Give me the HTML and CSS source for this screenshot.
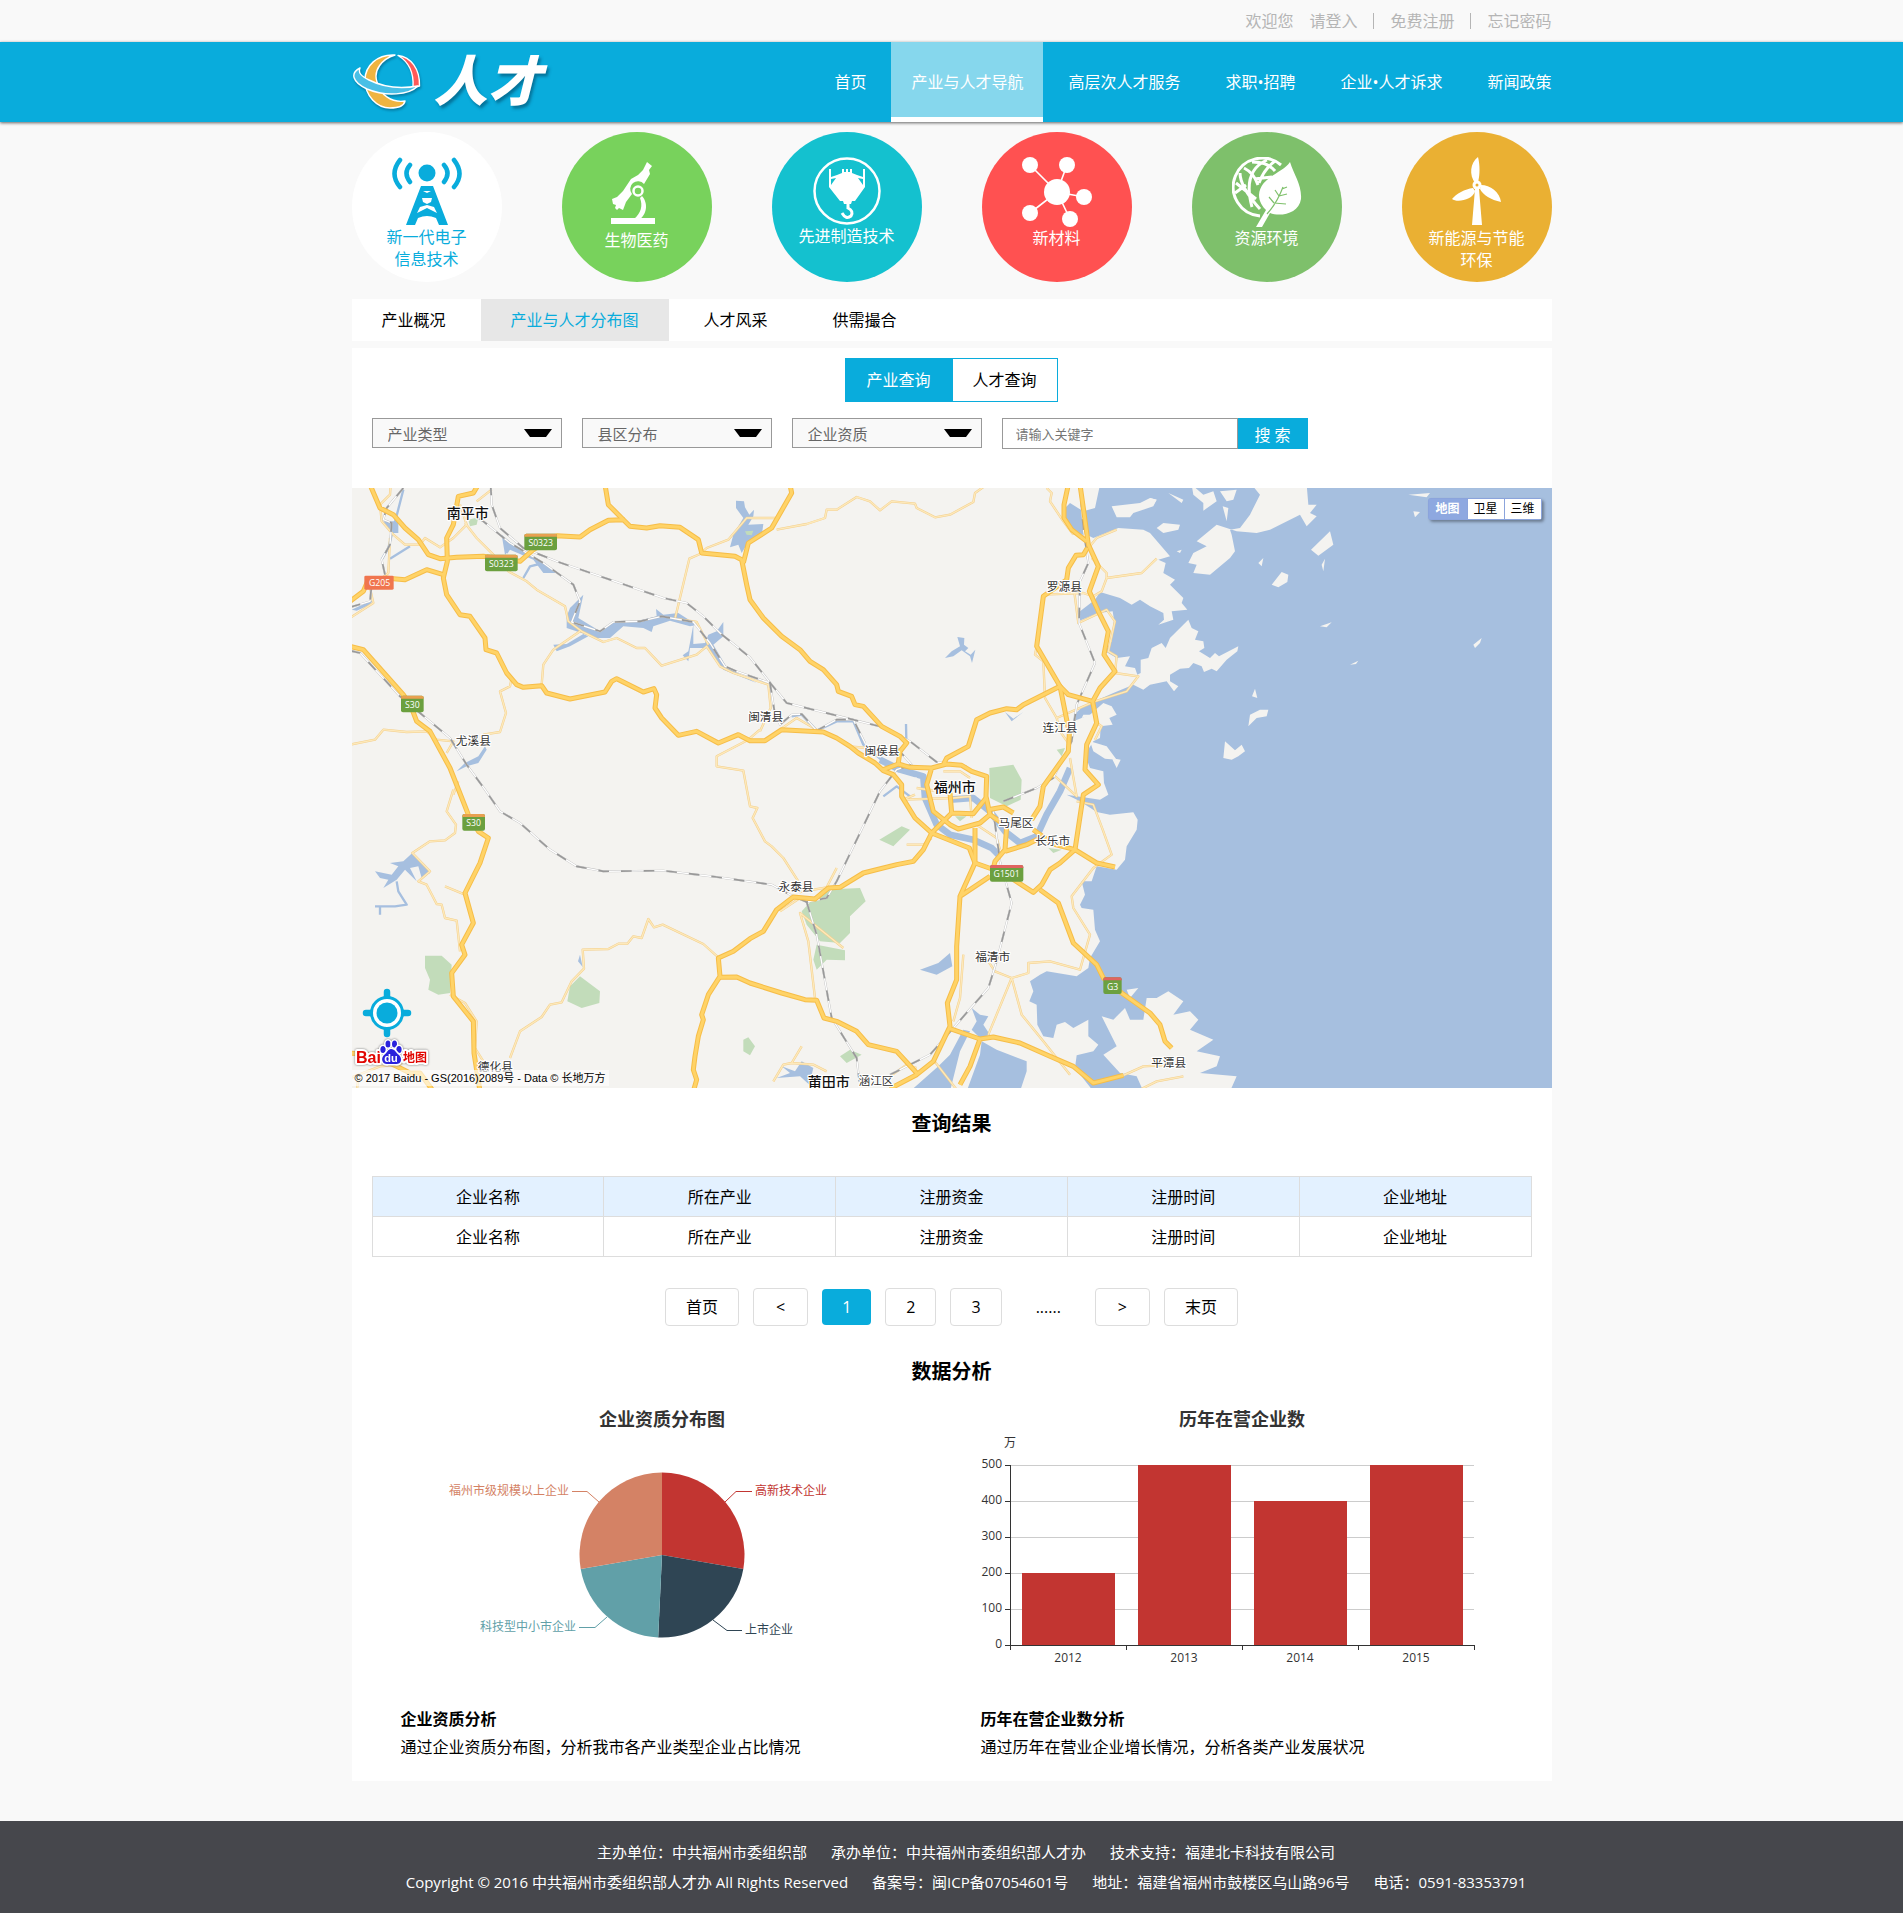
FILE: index.html
```html
<!DOCTYPE html>
<html lang="zh-CN">
<head>
<meta charset="utf-8">
<meta name="viewport" content="width=device-width, initial-scale=1">
<title>产业与人才分布图</title>
<link rel="stylesheet" href="styles.css">
</head>
<body>
<div class="topbar">
  <div class="container topbar-inner">
    <span>欢迎您</span><a href="#">请登入</a><i class="bar"></i><a href="#">免费注册</a><i class="bar"></i><a href="#">忘记密码</a>
  </div>
</div>

<header class="header">
  <div class="container header-inner">
    <a class="logo" href="#">
      <svg width="70" height="80" viewBox="0 0 70 80" aria-hidden="true">
        <g stroke="#fff" stroke-width="1.4" stroke-linejoin="round">
          <path fill="#efb440" d="M43 13C25 12 13 24 13 38C13 54 25 66 38 66C46 66 52 64 53 59C40 61 28 53 25 40C21 28 30 17 43 13Z"/>
          <path fill="#ff5a58" d="M46 13.500C59 15 68 27 67.500 44L61 45.500C62 31 57 20 46 13.500Z"/>
          <path fill="#49bfe6" d="M8 26C-2 31 0 40 15 47C34 55 57 53 66 44C49 47 31 45 17 38C9 34 6 31 8 26Z"/>
        </g>
      </svg>
      <span class="logo-text">人才</span>
    </a>
    <nav class="nav">
      <a href="#">首页</a>
      <a href="#" class="active">产业与人才导航</a>
      <a href="#">高层次人才服务</a>
      <a href="#">求职•招聘</a>
      <a href="#">企业•人才诉求</a>
      <a href="#">新闻政策</a>
    </nav>
  </div>
</header>

<main class="container">
  <div class="industries">
    <a href="#" class="industry electronic">
      <svg width="70" height="69" viewBox="0 0 70 69" fill="none" stroke="#09acdc" aria-hidden="true">
        <circle cx="35" cy="16" r="8.500" fill="#09acdc" stroke="none"/>
        <g stroke-width="4.500" stroke-linecap="round"><path d="M18 8Q11 16 18 25M8 3Q-3 17 8 30M52 8Q59 16 52 25M62 3Q73 17 62 30"/></g>
        <path fill="#09acdc" fill-rule="evenodd" stroke="none" d="M29 29H41L56 68H47L44 61Q35 57 26 61L23 68H14ZM31 34L35 36L39 34ZM30 41L31 45L35 47L39 45L40 41ZM28 50L25 56L35 51L45 56L42 50L35 48Z"/>
      </svg>
      <span>新一代电子<br>信息技术</span>
    </a>
    <a href="#" class="industry medicine">
      <svg width="54" height="72" viewBox="0 0 54 72" fill="#fff" aria-hidden="true">
        <path d="M37 5L42 9L39 13L40 17L34 27A7 7 0 0 0 22 37L16 45L13 53L9 51L7 53L5 51L6 48L3 47L2 42L7 40L13 34L21 22L28 18L33 13ZM1 61H45V67H1Z"/>
        <circle cx="28" cy="34" r="4.500" fill="none" stroke="#fff" stroke-width="2.500"/>
        <path d="M32 39C39 47 36 58 30 62H24C31 56 33 49 30 41Z"/>
      </svg>
      <span>生物医药</span>
    </a>
    <a href="#" class="industry manufacture">
      <svg width="68" height="68" viewBox="0 0 68 68" fill="#fff" aria-hidden="true">
        <circle cx="34" cy="34" r="32.500" fill="none" stroke="#fff" stroke-width="2.500"/>
        <path fill-rule="evenodd" d="M16 12H18V20L24 18L29 16V12H31V15H33V12H35V15H37V12H39V16L44 18L50 20V12H52V30L42 44H39L38 47H31L30 44H27L16 30ZM18 22V28L23 21ZM50 22V28L45 21Z"/>
        <path d="M35 46V51Q41 54 38 59Q33 63 29 56" fill="none" stroke="#fff" stroke-width="3"/>
      </svg>
      <span>先进制造技术</span>
    </a>
    <a href="#" class="industry material">
      <svg width="70" height="70" viewBox="0 0 70 70" fill="#fff" aria-hidden="true">
        <path d="M8 8L35 35L45 8M35 35L62 40M8 56L35 35L48 62" fill="none" stroke="#fff" stroke-width="1.600"/>
        <circle cx="35" cy="35" r="13"/><circle cx="8" cy="8" r="8"/><circle cx="45" cy="8" r="8"/><circle cx="62" cy="40" r="8"/><circle cx="8" cy="56" r="8"/><circle cx="48" cy="62" r="8"/>
      </svg>
      <span>新材料</span>
    </a>
    <a href="#" class="industry environment">
      <svg width="70" height="70" viewBox="0 0 70 70" fill="none" stroke="#fff" aria-hidden="true">
        <g stroke-width="3"><path d="M49 8A29 29 0 1 0 28 59"/><path d="M20 5Q36 5 43 14M35 3Q10 14 20 50M8 16Q8 30 28 52M4 26L24 42M12 11Q22 16 26 28M43 4Q32 12 27 26M22 22L40 20M3 36L14 28"/></g>
        <path fill="#fff" stroke="none" d="M58 5C51 16 28 20 27 38C27 45 31 50 34 53L24 70H30L38 56C48 60 67 57 69 42C70 28 62 18 58 5Z"/>
        <path stroke="#7ec06b" stroke-width="1.200" d="M35 57Q45 46 51 30M42 46L37 40M42 46L54 47M47 39L43 33M47 39L55 37M50 32L55 30"/>
      </svg>
      <span>资源环境</span>
    </a>
    <a href="#" class="industry energy">
      <svg width="52" height="70" viewBox="0 0 52 70" fill="#fff" aria-hidden="true">
        <path d="M27 0C29 8 29 18 27 25L24 26C18 18 19 6 27 0ZM30 28C39 28 49 35 50 45C40 43 32 38 29 32ZM22 31C14 32 5 37 1 42C6 46 22 43 24 34ZM24 32H28L31 68H21Z"/>
        <circle cx="26" cy="28" r="4.500"/><circle cx="26" cy="28" r="1.500" fill="#eab033"/>
      </svg>
      <span>新能源与节能<br>环保</span>
    </a>
  </div>

  <nav class="tabs">
    <a href="#">产业概况</a>
    <a href="#" class="active">产业与人才分布图</a>
    <a href="#">人才风采</a>
    <a href="#">供需撮合</a>
  </nav>

  <section class="panel">
    <div class="toggle">
      <button type="button" class="active">产业查询</button><button type="button">人才查询</button>
    </div>
    <form class="filters" onsubmit="return false">
      <div class="select"><select aria-label="产业类型"><option>产业类型</option></select></div>
      <div class="select"><select aria-label="县区分布"><option>县区分布</option></select></div>
      <div class="select"><select aria-label="企业资质"><option>企业资质</option></select></div>
      <div class="search">
        <input type="text" placeholder="请输入关键字" aria-label="关键字"><button type="submit">搜 索</button>
      </div>
    </form>

    <div class="map">
      <svg class="map-canvas" viewBox="6 10 3600 1800" preserveAspectRatio="xMidYMid slice" role="img" aria-label="福州市地图">
        <defs>
          <g id="highways">
            <path d="M60 0L90 70L130 90L165 130L205 165L235 210L270 222L320 218L400 215L510 230L550 195L590 170L620 153L690 157L720 135L775 107L820 105L840 125L890 130L930 123L990 128L1045 165L1055 205L1155 215L1175 225L1190 300L1200 345L1240 400L1295 455L1350 495L1380 530L1420 555L1460 600L1465 620L1505 635L1515 660L1540 665L1595 725L1650 755L1670 775L1650 800L1645 835"/>
            <path d="M1180 235L1195 175L1265 130L1325 25L1320 0M765 0L775 60L820 105"/>
            <path d="M385 0L370 25L325 35L310 120L290 160L292 230L280 280L290 330L330 390L360 395L405 460L408 495L440 505L470 565L500 600L520 608L575 603L590 625L660 643L765 622L785 590L800 582L880 622L912 612L920 630L915 670L935 700L985 752L1040 740L1105 775L1165 750L1200 768L1245 768L1295 735L1420 742L1460 760L1500 785L1525 805L1575 835L1600 858L1630 870L1655 900L1655 935L1695 1000L1745 1045"/>
            <path d="M0 350L40 320L55 285M105 280L165 285L230 255L280 270M0 485L40 495L160 630L185 670L200 710L240 740L300 850L355 990L385 1040L415 1060L390 1135L345 1225L370 1315L335 1380L345 1410L305 1465L310 1535L370 1610L372 1705L390 1820"/>
            <path d="M2155 0L2142 60L2142 100L2165 135L2210 170M2190 0L2200 70L2215 180L2245 245L2218 320L2245 380L2275 440L2262 510L2295 560L2250 610L2228 650L2240 715L2210 780L2205 855L2245 900L2200 930L2175 1095L2240 1135L2295 1147"/>
            <path d="M2212 190L2200 210L2178 212L2155 250L2150 285L2080 335L2060 485L2130 605L2145 680L2158 745L2155 800L2080 905L2070 965L2045 1005"/>
            <path d="M2228 650L2155 630L2130 605L2020 660L2000 675L1970 672L1920 685L1880 705L1855 785L1790 820L1780 840M1600 855L1645 838L1680 848L1745 850L1790 838L1835 842L1865 860L1910 875L1908 935L1920 990L1890 1015L1825 1033L1800 1020L1750 980L1730 900L1745 850"/>
            <path d="M1800 925L1805 985L1870 987L1908 940M1745 1045L1805 985M1915 975L1960 967L1990 985M1920 990L1970 1025L1965 1095L1935 1130L1930 1150M1965 1100L2030 1080L2070 1060M2050 1035L2110 1078L2175 1095L2130 1135L2100 1155L2075 1200L2050 1223L1960 1165L1875 1135L1858 1090L1745 1045L1720 1095L1690 1130L1640 1140L1540 1165L1470 1208L1435 1210L1395 1243L1330 1237L1280 1275L1240 1340L1200 1362L1150 1400L1105 1420L1110 1475L1075 1530L1055 1590L1060 1605L1045 1655L1035 1715L1030 1755L1040 1785L1030 1820"/>
            <path d="M1875 1030L1875 1135L1830 1235L1920 1175M1830 1235L1820 1385L1820 1485L1792 1555L1800 1625L1750 1730L1700 1770L1620 1812M1110 1478L1160 1477L1200 1495L1295 1525L1365 1545L1400 1547L1422 1600L1460 1610L1520 1640L1555 1680L1640 1700L1700 1765"/>
            <path d="M2070 1215L2125 1255L2170 1375L2240 1440L2260 1480L2315 1525L2400 1585L2430 1620L2445 1670L2465 1690M1800 1632L1890 1663L1930 1657L2010 1675L2100 1715L2170 1745L2230 1795L2320 1772M1890 1663L1860 1745L1830 1800"/>
            <path d="M0 1705L60 1710L140 1745L180 1765L210 1765L250 1820"/>
          </g>
          <g id="roads">
            <path d="M122 0L120 30L90 60L95 110L130 150L165 180L210 180L225 160L270 188L310 160L350 120L330 60M120 160L115 265L60 310L70 355L0 400M345 115L380 160L430 210L475 260L530 290L560 315L645 365L655 410L695 440L760 472L800 460L860 490L885 490L935 543L1040 510L1070 485L1110 545L1150 565L1230 592L1255 600L1262 670L1230 740M690 440L610 495L580 540L575 600M1280 100L1190 100L1135 165L1070 190L1050 208L1018 222L975 402L1040 412L1075 480M380 50L425 15"/>
            <path d="M0 780L75 765L100 735L170 742L230 740L260 765L310 770L290 805M485 580L480 605L450 620L468 685L450 742L400 750M310 915L290 980L318 1020L315 1045L285 1067L240 1070L187 1105L240 1160L205 1190L230 1200L260 1258L275 1260L285 1300L320 1308L330 1400M325 890L310 930M285 1205L345 1230M300 1530L345 1555L380 1610L375 1690L400 1730"/>
            <path d="M1230 735L1195 765L1100 815L1100 845L1180 858L1200 965L1222 970L1208 1000L1245 1070L1265 1085L1300 1120L1345 1190M480 1720L510 1640L575 1597L600 1560L635 1553L665 1490L702 1452L698 1395L775 1393L805 1377L832 1377L850 1355L875 1360L895 1303L912 1328L938 1320L1060 1378L1105 1418"/>
            <path d="M1280 135L1370 118L1425 100L1430 75L1460 75L1520 37L1560 50L1590 77L1625 50L1695 57L1700 70L1755 98L1800 90L1870 52L1875 25L1910 0M2090 10L2105 25L2100 50L2140 110L2170 150M2215 190L2240 160L2300 135M2225 220L2270 265L2270 280L2375 265L2420 222M2270 280L2255 320L2230 335L2200 325L2080 330M2170 300L2185 415L2270 375L2295 410L2275 500L2300 515L2295 565L2365 575L2330 620L2235 650L2120 700L2085 640L2080 530L2055 510L2060 485"/>
            <path d="M2120 700L2130 740L2155 775M2240 715L2255 725L2235 765M1460 1150L1430 1208L1350 1222L1330 1190M2180 950L2230 960L2260 1040L2285 1110L2230 1150L2165 1235L2170 1270L2220 1350L2190 1455L2100 1430L2035 1435L2035 1465L1985 1480L1935 1460L1915 1430M1985 1480L2015 1590L2080 1670L2160 1770M1985 1480L1915 1650M1840 1410L1830 1540L1810 1610M1480 1390L1350 1285L1375 1370L1395 1540M1290 1280L1350 1240M1670 1080L1720 1080L1745 1060M1695 930L1660 945L1810 940L1860 935L1865 1000M1780 860L1830 860L1860 880M2160 820L2180 935L2110 870M1270 1790L1300 1740L1325 1735L1390 1740L1430 1760M1355 1685L1325 1735M1700 1750L1670 1740L1620 1775M1750 1725L1820 1815M2320 1772L2380 1745L2470 1740M2360 1820L2420 1790L2500 1775"/>
            <path d="M0 1780L90 1745L150 1740L200 1700M20 1820L25 1780M1500 785L1550 790L1580 815M1700 910L1800 925M1880 1020L1940 1060L1950 1095M1400 735L1340 700L1290 735"/>
          </g>
          <g id="railways">
            <path d="M422 0L425 60L450 130L520 190L620 230L940 340L1010 355L1060 395L1110 445L1200 518L1265 600L1310 655L1600 728L1680 770L1760 832L1850 845"/>
            <path d="M385 100L400 110L480 175L580 235L670 300L690 350L665 412L750 440L790 412L870 410L935 395L1030 412L1080 475L1125 545L1160 560L1260 595L1275 690L1290 720L1325 690L1355 688L1400 738L1460 705L1510 705L1545 775M160 10L110 70L100 105L125 115L120 180L95 225L105 270M0 368L60 350L65 300"/>
            <path d="M0 498L30 505L150 635L210 685L300 760L350 840L405 915L450 980L510 1015L600 1095L680 1145L760 1160L940 1158L1100 1177L1265 1200L1320 1230L1370 1252L1430 1240L1460 1190L1590 920L1640 855L1685 840L1640 790"/>
            <path d="M1370 1252L1400 1350L1445 1600L1520 1720L1528 1790M1620 1770L1740 1710L1810 1630L1915 1510L1940 1430L1985 1255L1950 1130L1930 980M1960 950L2060 910L2110 880L2165 770L2180 660L2235 535L2187 415L2190 290L2215 235L2200 130L2192 30"/>
          </g>
        </defs>

        <rect x="0" y="0" width="3620" height="1820" class="land"/>
        <g class="water">
          <path d="M2250 0L2235 70L2200 80L2160 55L2140 75L2145 110L2170 150L2210 150L2230 160L2305 130L2380 135L2400 145L2460 215L2425 225L2447 235L2440 265L2475 285L2460 300L2500 340L2495 355L2512 375L2465 380L2470 405L2425 420L2442 405L2440 385L2400 365L2370 345L2345 360L2310 340L2250 322L2235 345L2190 380L2185 410L2245 385L2288 380L2292 405L2285 470L2265 500L2300 520L2340 515L2325 545L2355 550L2362 570L2372 565L2372 525L2395 520L2405 490L2435 475L2447 490L2460 460L2515 405L2525 430L2545 440L2535 465L2560 470L2563 490L2547 500L2580 520L2595 505L2607 515L2665 485L2662 500L2630 525L2600 560L2585 552L2562 562L2555 545L2530 535L2517 550L2490 552L2460 570L2460 590L2485 605L2472 620L2450 590L2400 600L2380 615L2350 600L2290 625L2200 665L2172 690L2170 710L2220 690L2260 655L2285 665L2300 690L2278 700L2288 720L2252 725L2250 760L2230 770L2205 810L2220 850L2260 860L2262 895L2275 930L2250 945L2150 930L2190 950L2240 982L2280 990L2350 983L2363 1005L2360 1035L2330 1085L2325 1125L2300 1155L2240 1145L2225 1190L2195 1190L2205 1230L2190 1260L2195 1270L2230 1275L2235 1335L2250 1370L2220 1420L2215 1450L2180 1475L2090 1460L2070 1470L2040 1490L2050 1520L2038 1550L2060 1560L2062 1620L2080 1655L2110 1660L2120 1620L2145 1612L2170 1630L2215 1605L2215 1655L2245 1680L2230 1700L2180 1712L2175 1750L2230 1820H3620V0Z"/>
          <path d="M1158 48L1182 50L1185 68L1198 90L1212 75L1210 95L1195 120L1240 118L1235 155L1190 180L1175 205L1165 180L1140 188L1150 150L1165 125L1180 100L1158 70Z"/>
          <path d="M650 395L660 370L700 330L685 400L750 440L790 412L860 410L920 395L918 373L940 390L985 385L1040 420L1020 425L960 408L910 425L905 442L880 430L820 425L780 460L740 460L650 430ZM1030 420L1015 500L998 512L1015 530L1020 490L1070 490L1120 555L1220 595L1130 548L1090 480L1120 455V412L1100 440L1075 450L1065 475L1030 478Z"/>
          <path d="M455 150L490 180L550 215L620 265L580 265L550 225L480 195L465 210ZM610 480L650 478L700 448L715 455L660 485L620 500ZM320 860L345 835L385 815L405 785L410 795L385 835L350 845ZM100 110L145 110L145 145L125 145ZM5 375L70 345L60 360L20 378Z"/>
          <path d="M1785 520L1805 500L1830 485L1822 457L1843 460L1842 480L1855 490L1845 500L1862 510L1876 495L1866 535L1860 515L1835 497L1810 515Z"/>
          <path d="M1965 682L1985 710L2020 682L1990 702ZM1710 1455L1765 1435L1800 1405L1807 1445L1760 1470ZM1865 1570L1890 1590L1915 1595L1900 1620L1920 1650L1890 1660L1865 1635L1880 1610ZM1840 1635L1860 1640L1830 1700L1800 1820L1680 1820L1765 1745L1800 1710ZM1895 1670L1940 1695L2030 1730L2030 1760L2010 1820L1850 1820L1890 1710ZM1295 1745L1335 1760L1355 1730L1390 1750L1385 1770L1410 1780L1380 1775L1400 1820L1350 1775L1280 1780L1320 1765Z"/>
          <path d="M187 1105L210 1125L225 1140L240 1165L215 1180L205 1145L180 1150L200 1190L165 1155L140 1185L100 1210L115 1185L90 1180L75 1160L125 1170L145 1145L120 1135L160 1130ZM690 1410L698 1447L684 1430Z"/>
          <path class="river" d="M140 1190L145 1220L170 1260L135 1265L75 1265M90 1290L90 1262M1325 695L1355 690L1400 738L1460 710L1510 710L1540 780L1600 830"/>
          <path class="river-wide" d="M1590 825L1650 855L1720 875L1725 940L1760 1020L1800 1050L1870 1065L1925 1090L1945 1110M1800 945L1870 940L1920 980L1965 1040L2010 1075L2060 1055L2090 990L2130 920L2160 850"/>
          <path class="river" d="M1600 935L1640 905L1680 935M95 225L115 190L160 15M120 222L180 185M470 205L485 175M520 280L540 245L580 235M1668 718L1669 765"/>
        </g>
        <g class="land">
          <path d="M2285 65L2370 55L2400 40L2420 45L2410 65L2350 85L2340 98L2300 98ZM2525 0L2560 30L2590 20L2600 50L2560 78L2560 55L2530 30ZM2705 0L2730 30L2700 90L2670 130L2640 135L2645 150L2655 200L2640 220L2580 270L2530 265L2540 240L2515 235L2530 205L2570 185L2540 170L2600 120L2660 140L2720 145L2760 135L2850 90L2870 125L2900 95L2880 85L2900 60L2875 60L2870 0Z"/>
          <path d="M2420 130L2440 115L2490 120L2485 135L2440 145ZM2610 20L2660 15L2650 45L2630 50ZM2618 65L2635 70L2630 110ZM2883 195L2940 140L2950 180L2905 213ZM2725 235L2740 220L2735 245ZM2765 300L2795 262L2815 270L2812 292L2785 308ZM2915 240L2925 222L2920 260ZM2400 40L2420 45L2410 60H2400ZM2455 25L2500 45L2495 55ZM3175 30L3240 25L3230 38ZM3190 80L3210 82L3195 98ZM3370 480L3395 460L3390 475L3375 490ZM2706 635L2715 612L2722 640ZM2695 725L2700 690L2730 675L2755 675L2750 695L2720 700ZM2620 820L2625 770L2655 797L2675 780L2685 800L2665 815L2645 825ZM2220 770L2270 785L2300 825L2265 822L2230 800ZM2285 820L2312 825L2300 850ZM2480 200L2495 195L2490 205Z"/>
          <path d="M2255 1595L2290 1605L2325 1570L2340 1605L2380 1605L2390 1540L2420 1540L2455 1520L2500 1550L2470 1590L2520 1580L2545 1605L2520 1635L2590 1665L2540 1700L2610 1715L2600 1745L2550 1765L2660 1775L2640 1820L2380 1820L2360 1775L2310 1765L2260 1710L2300 1685ZM2330 1515L2365 1510L2340 1540Z"/>
          <path d="M1665 885L1700 878L1700 895L1670 890ZM2195 700L2200 690L2230 690ZM2910 425L2945 413L2930 428ZM3000 540L3025 528L3018 538Z"/>
        </g>
        <g class="park">
          <path d="M355 105L385 98L380 120L360 125ZM1185 140L1210 138L1205 152L1190 150ZM225 1413L275 1413L305 1440L300 1525L265 1530L235 1515L240 1485L225 1450ZM690 1475L750 1520L748 1555L695 1570L652 1550L660 1505ZM1180 1665L1195 1658L1215 1685L1200 1712L1180 1700Z"/>
          <path d="M1415 1215L1530 1210L1547 1250L1500 1295L1500 1345L1470 1375L1410 1370L1370 1320L1355 1280ZM1400 1380L1485 1397L1485 1427L1430 1425L1400 1455L1390 1425ZM1588 1065L1655 1025L1680 1035L1630 1085ZM1470 1715L1500 1695L1535 1710L1490 1735ZM2095 1090L2135 1095L2110 1105ZM1815 995L1850 995L1830 1010ZM1918 850L1990 840L2015 885L2012 945L1970 965L1920 940ZM2120 795L2145 790L2135 815Z"/>
        </g>
        <use href="#roads" class="road-edge"/>
        <use href="#roads" class="road-fill"/>
        <use href="#railways" class="rail-edge"/>
        <use href="#railways" class="rail-fill"/>
        <use href="#railways" class="rail-dash"/>
        <use href="#highways" class="highway-edge"/>
        <use href="#highways" class="highway-fill"/>

        <g class="shield">
          <rect x="523" y="147" width="98" height="50" rx="6"/><path d="M523 156V153Q523 147 529 147H615Q621 147 621 153V156Z"/><text x="572" y="183">S0323</text>
          <rect x="405" y="210" width="98" height="50" rx="6"/><path d="M405 219V216Q405 210 411 210H497Q503 210 503 216V219Z"/><text x="454" y="246">S0323</text>
          <rect x="153" y="633" width="68" height="50" rx="6"/><path d="M153 642V639Q153 633 159 633H215Q221 633 221 639V642Z"/><text x="187" y="669">S30</text>
          <rect x="337" y="988" width="68" height="50" rx="6"/><path d="M337 997V994Q337 988 343 988H399Q405 988 405 994V997Z"/><text x="371" y="1024">S30</text>
          <rect x="1920" y="1141" width="100" height="50" rx="6"/><path class="national" d="M1920 1150V1147Q1920 1141 1926 1141H2014Q2020 1141 2020 1147V1150Z"/><text x="1970" y="1177">G1501</text>
          <rect x="2260" y="1478" width="55" height="50" rx="6"/><path class="national" d="M2260 1487V1484Q2260 1478 2266 1478H2309Q2315 1478 2315 1484V1487Z"/><text x="2288" y="1515">G3</text>
          <rect class="state" x="43" y="273" width="88" height="42" rx="4"/><text x="89" y="304">G205</text>
        </g>
        <g class="place">
          <text class="city" x="353" y="99">南平市</text>
          <text x="370" y="781">尤溪县</text>
          <text x="1247" y="708">闽清县</text>
          <text x="1596" y="810">闽侯县</text>
          <text x="2143" y="318">罗源县</text>
          <text x="2130" y="741">连江县</text>
          <text class="city" x="1814" y="922">福州市</text>
          <text x="1998" y="1028">马尾区</text>
          <text x="2108" y="1080">长乐市</text>
          <text x="1338" y="1218">永泰县</text>
          <text x="1928" y="1430">福清市</text>
          <text class="city" x="1436" y="1806">莆田市</text>
          <text x="1578" y="1802">涵江区</text>
          <text x="2456" y="1747">平潭县</text>
          <text x="436" y="1758">德化县</text>
        </g>
      </svg>

      <div class="map-types">
        <button type="button" class="active">地图</button><button type="button">卫星</button><button type="button">三维</button>
      </div>
      <div class="map-corner">
        <button type="button" class="locate" aria-label="定位">
          <svg width="50" height="50" viewBox="0 0 50 50" aria-hidden="true">
            <path d="M25 4V14M25 36V46M4 25H14M36 25H46" stroke="#09acdc" stroke-width="6.500" stroke-linecap="round"/>
            <circle cx="25" cy="25" r="15.500" fill="#fff" stroke="#09acdc" stroke-width="3"/>
            <circle cx="25" cy="25" r="10.500" fill="#09acdc"/>
          </svg>
        </button>
        <svg class="baidu" width="78" height="28" viewBox="0 0 78 28" role="img" aria-label="百度地图">
          <g class="baidu-halo"><text class="baidu-latin" x="2" y="24">Bai</text><text class="baidu-cjk" x="49" y="23">地图</text></g>
          <g fill="#2a22dc" stroke="#fff" stroke-width="3" paint-order="stroke">
            <ellipse cx="29" cy="10.500" rx="2.600" ry="3.600"/><ellipse cx="34" cy="5" rx="2.500" ry="3.500"/><ellipse cx="40.500" cy="5" rx="2.500" ry="3.500"/><ellipse cx="45" cy="10.500" rx="2.600" ry="3.600"/>
            <path d="M37 10C34 10 33 14 30 16C26 20 29 26 34 25H41C47 26 49 20 45 16C42 14 41 10 37 10Z"/>
          </g>
          <text class="baidu-du" x="37" y="23">du</text>
        </svg>
        <div class="copyright">© 2017 Baidu - GS(2016)2089号 - Data © 长地万方</div>
      </div>
    </div>

    <h2>查询结果</h2>
    <table class="results">
      <thead><tr><th>企业名称</th><th>所在产业</th><th>注册资金</th><th>注册时间</th><th>企业地址</th></tr></thead>
      <tbody><tr><td>企业名称</td><td>所在产业</td><td>注册资金</td><td>注册时间</td><td>企业地址</td></tr></tbody>
    </table>

    <nav class="pages" aria-label="分页">
      <a href="#">首页</a><a href="#" class="arrow">&lt;</a><a href="#" class="active">1</a><a href="#">2</a><a href="#">3</a><span>......</span><a href="#" class="arrow">&gt;</a><a href="#">末页</a>
    </nav>

    <h2>数据分析</h2>
    <div class="charts">
      <article>
        <svg class="chart" viewBox="0 0 580 318" role="img" aria-label="企业资质分布图">
          <text class="chart-title" x="290" y="39">企业资质分布图</text>
          <path fill="#c23531" d="M290 168V85.500A82.500 82.500 0 0 1 371.300 182Z"/>
          <path fill="#2f4554" d="M290 168L371.300 182A82.500 82.500 0 0 1 286.200 250.400Z"/>
          <path fill="#61a0a8" d="M290 168L286.200 250.400A82.500 82.500 0 0 1 208.700 182Z"/>
          <path fill="#d48265" d="M290 168L208.700 182A82.500 82.500 0 0 1 290 85.500Z"/>
          <g fill="none">
            <path stroke="#c23531" d="M353 115L364 104.500H380"/>
            <path stroke="#2f4554" d="M341 233L355 243.500H370"/>
            <path stroke="#61a0a8" d="M235 230L223 240.500H207"/>
            <path stroke="#d48265" d="M227 115L215 104.500H200"/>
          </g>
          <text x="383" y="108" fill="#c23531">高新技术企业</text>
          <text x="373" y="247" fill="#2f4554">上市企业</text>
          <text x="204" y="244" fill="#61a0a8" text-anchor="end">科技型中小市企业</text>
          <text x="197" y="108" fill="#d48265" text-anchor="end">福州市级规模以上企业</text>
        </svg>
        <h3>企业资质分析</h3>
        <p>通过企业资质分布图，分析我市各产业类型企业占比情况</p>
      </article>
      <article>
        <svg class="chart" viewBox="0 0 580 318" role="img" aria-label="历年在营企业数">
          <text class="chart-title" x="290" y="39">历年在营企业数</text>
          <path stroke="#ccc" d="M58 78.500H522M58 114.500H522M58 150.500H522M58 186.500H522M58 222.500H522"/>
          <path fill="#c23531" d="M70 186H163V258H70ZM186 78H279V258H186ZM302 114H395V258H302ZM418 78H511V258H418Z"/>
          <path stroke="#333" fill="none" d="M58.500 78V263M53 78.500H58M53 114.500H58M53 150.500H58M53 186.500H58M53 222.500H58M53 258.500H522.500M174.500 258V263M290.500 258V263M406.500 258V263M522.500 258V263"/>
          <g fill="#333" text-anchor="end">
            <text x="50" y="81">500</text><text x="50" y="117">400</text><text x="50" y="153">300</text><text x="50" y="189">200</text><text x="50" y="225">100</text><text x="50" y="261">0</text>
          </g>
          <g fill="#333" text-anchor="middle">
            <text x="58" y="60">万</text><text x="116" y="275">2012</text><text x="232" y="275">2013</text><text x="348" y="275">2014</text><text x="464" y="275">2015</text>
          </g>
        </svg>
        <h3>历年在营企业数分析</h3>
        <p>通过历年在营业企业增长情况，分析各类产业发展状况</p>
      </article>
    </div>
  </section>
</main>

<footer class="footer">
  <p><span>主办单位：中共福州市委组织部</span><span>承办单位：中共福州市委组织部人才办</span><span>技术支持：福建北卡科技有限公司</span></p>
  <p><span>Copyright © 2016 中共福州市委组织部人才办 All Rights Reserved</span><span>备案号：闽ICP备07054601号</span><span>地址：福建省福州市鼓楼区乌山路96号</span><span>电话：0591-83353791</span></p>
</footer>
</body>
</html>
```
FILE: styles.css
```css
* {
  box-sizing: border-box;
}

body {
  margin: 0;
  background: #f9f9f9;
  color: #000;
  font: 16px/24px "Open Sans", "Noto Sans CJK SC", sans-serif;
}

a {
  color: inherit;
  text-decoration: none;
}

button,
input,
select {
  margin: 0;
  border-radius: 0;
  font-family: inherit;
}

button {
  padding: 0;
  cursor: pointer;
}

h2,
h3,
p {
  margin: 0;
}

.container {
  max-width: 1200px;
  margin: 0 auto;
}

/* Top bar */
.topbar-inner {
  display: flex;
  justify-content: flex-end;
  align-items: center;
  gap: 16px;
  height: 42px;
  color: #b5b5b5;
}

.bar {
  width: 1px;
  height: 16px;
  background: #b5b5b5;
}

/* Header */
.header {
  position: relative;
  background: #09acdc;
  box-shadow: 0 1px 3px rgba(0, 0, 0, 0.6);
}

.header-inner {
  display: flex;
  justify-content: space-between;
}

.logo {
  display: flex;
  gap: 12px;
  color: #fff;
}

.logo svg {
  filter: drop-shadow(1px 2px 1px rgba(0, 60, 90, 0.4));
}

.logo-text {
  font: italic 900 54px/72px "Noto Sans CJK SC", sans-serif;
  text-shadow: 2px 3px 3px rgba(0, 60, 90, 0.5);
}

.nav {
  display: flex;
  gap: 5px;
  color: #fff;
  line-height: 80px;
}

.nav a {
  padding: 0 20px;
}

.nav a:last-child {
  padding-right: 0;
}

.nav .active {
  background: #86d7ed;
  box-shadow: inset 0 -5px #fff;
}

/* Industry circles */
.industries {
  display: flex;
  justify-content: space-between;
  margin: 10px 0 17px;
}

.industry {
  display: flex;
  flex-direction: column;
  align-items: center;
  width: 150px;
  height: 150px;
  padding-top: 25px;
  border-radius: 50%;
  color: #fff;
  line-height: 22px;
  text-align: center;
}

.industry svg {
  flex: none;
}

.electronic {
  background: #fff;
  color: #09acdc;
}

.medicine {
  background: #78d25c;
}

.manufacture {
  background: #14c1cf;
}

.material {
  background: #ff5151;
}

.environment {
  background: #7ec06b;
}

.energy {
  background: #eab033;
}

/* Section tabs */
.tabs {
  display: flex;
  gap: 5px;
  margin-bottom: 7px;
  background: #fff;
  line-height: 42px;
}

.tabs a {
  padding: 0 30px;
}

.tabs .active {
  background: #e7e7e7;
  color: #09acdc;
}

/* Query panel */
.panel {
  margin-bottom: 40px;
  padding: 10px 0 20px;
  background: #fff;
}

.toggle {
  display: flex;
  justify-content: center;
  margin-bottom: 16px;
}

.toggle button {
  padding: 0 20px;
  border: 1px solid #09acdc;
  background: #fff;
  color: #000;
  font-size: 16px;
  line-height: 42px;
}

.toggle .active {
  background: #09acdc;
  color: #fff;
}

.filters {
  display: flex;
  flex-wrap: wrap;
  align-items: flex-start;
  gap: 20px;
  margin: 0 20px 39px;
}

.select {
  position: relative;
  width: 190px;
}

.select::after {
  content: "";
  position: absolute;
  top: 11px;
  right: 10px;
  width: 16px;
  border: solid transparent;
  border-width: 8px 6px 0;
  border-top-color: #000;
  pointer-events: none;
}

.select select {
  display: block;
  width: 100%;
  height: 30px;
  padding: 2px 15px 0;
  appearance: none;
  border: 1px solid #999;
  background: #f9f9f9;
  color: #666;
  font-size: 15px;
}

.search {
  display: flex;
  height: 31px;
}

.search input {
  width: 236px;
  padding: 0 13px;
  border: 1px solid #999;
  background: #fff;
  font-size: 13px;
}

.search input::placeholder {
  color: #757575;
}

.search button {
  width: 70px;
  border: 0;
  background: #09acdc;
  color: #fff;
  font-size: 16px;
}

/* Map */
.map {
  position: relative;
  height: 600px;
  overflow: hidden;
}

.map-canvas {
  display: block;
  width: 100%;
  height: 100%;
}

.map-canvas use {
  fill: none;
  stroke-linejoin: round;
}

.land {
  fill: #f4f3f0;
}

.water {
  fill: #a6bfdf;
}

.river,
.river-wide {
  fill: none;
  stroke: #a6bfdf;
  stroke-width: 7;
  stroke-linejoin: round;
}

.river-wide {
  stroke-width: 20;
}

.park {
  fill: #c2dcba;
}

.road-edge {
  stroke: #f3cf8c;
  stroke-width: 7;
}

.road-fill {
  stroke: #fde9bb;
  stroke-width: 4;
}

.highway-edge {
  stroke: #f6bd48;
  stroke-width: 15;
}

.highway-fill {
  stroke: #ffd367;
  stroke-width: 9;
}

.rail-edge {
  stroke: #bbb;
  stroke-width: 6;
}

.rail-fill {
  stroke: #fff;
  stroke-width: 4;
}

.rail-dash {
  stroke: #999;
  stroke-width: 5;
  stroke-dasharray: 32 36;
}

.shield {
  font-size: 26px;
  text-anchor: middle;
}

.shield rect {
  fill: #6ba03f;
}

.shield path {
  fill: #e8a050;
}

.shield .national {
  fill: #e06460;
}

.shield .state {
  fill: #f0754e;
}

.shield text {
  fill: #fff;
}

.place {
  fill: #333;
  stroke: #fff;
  stroke-width: 7px;
  stroke-linejoin: round;
  paint-order: stroke;
  font-size: 35px;
  text-anchor: middle;
}

.place .city {
  fill: #111;
  font-size: 42px;
  font-weight: 500;
}

.map-types {
  position: absolute;
  top: 10px;
  right: 10px;
  display: flex;
  gap: 1px;
  padding: 1px;
  border-radius: 3px;
  background: #8ba4dc;
  box-shadow: 2px 2px 3px rgba(0, 0, 0, 0.35);
}

.map-types button {
  width: 36px;
  border: 0;
  background: #fff;
  color: #000;
  font-size: 12px;
  line-height: 20px;
}

.map-types .active {
  width: 38px;
  background: #8ea8e0;
  color: #fff;
  font-weight: 700;
}

.map-corner {
  position: absolute;
  left: 0;
  bottom: 0;
}

.locate {
  display: block;
  margin-left: 10px;
  border: 0;
  background: none;
}

.locate svg,
.baidu {
  display: block;
}

.baidu {
  margin: 1px 0 3px 2px;
  filter: drop-shadow(0 0 1px #777);
}

.baidu-halo {
  fill: #e10602;
  stroke: #fff;
  stroke-width: 4px;
  stroke-linejoin: round;
  paint-order: stroke;
}

.baidu-latin {
  font: 700 16px "Liberation Sans", sans-serif;
}

.baidu-cjk {
  font: 700 12px "Noto Sans CJK SC", sans-serif;
}

.baidu-du {
  fill: #fff;
  font: 700 11px "Liberation Sans", sans-serif;
  text-anchor: middle;
}

.copyright {
  margin-bottom: 2px;
  padding: 0 3px;
  background: rgba(255, 255, 255, 0.6);
  font: 11px/16px "Liberation Sans", "Noto Sans CJK SC", sans-serif;
}

/* Results */
h2 {
  padding-top: 21px;
  font-size: 20px;
  line-height: 30px;
  text-align: center;
}

.results {
  width: calc(100% - 40px);
  margin: 37px 20px 31px;
  border-collapse: collapse;
  table-layout: fixed;
  text-align: center;
}

.results th,
.results td {
  height: 40px;
  padding: 0;
  border: 1px solid #ddd;
  font-weight: 400;
}

.results th {
  background: #e3f1ff;
}

.pages {
  display: flex;
  flex-wrap: wrap;
  justify-content: center;
  align-items: center;
  gap: 14px;
  margin-bottom: 10px;
  line-height: 36px;
}

.pages a,
.pages span {
  padding: 0 20px;
}

.pages a {
  border: 1px solid #ddd;
  border-radius: 4px;
}

.pages .arrow {
  padding: 0 22px;
}

.pages .active {
  border: 0;
  background: #09acdc;
  color: #fff;
}

/* Charts */
.charts {
  display: grid;
  grid-template-columns: 1fr 1fr;
  margin: 0 20px;
}

.chart {
  display: block;
  width: 100%;
  font-size: 12px;
}

.chart-title {
  fill: #333;
  font-size: 18px;
  font-weight: 700;
  text-anchor: middle;
}

.charts h3,
.charts p {
  padding: 0 29px;
  font-size: 16px;
  line-height: 28px;
}

/* Footer */
.footer {
  padding: 16px 0 16px 29px;
  background: #46474c;
  color: #fff;
  font-size: 15px;
  line-height: 30px;
}

.footer p {
  display: flex;
  flex-wrap: wrap;
  justify-content: center;
  column-gap: 24px;
}
```
